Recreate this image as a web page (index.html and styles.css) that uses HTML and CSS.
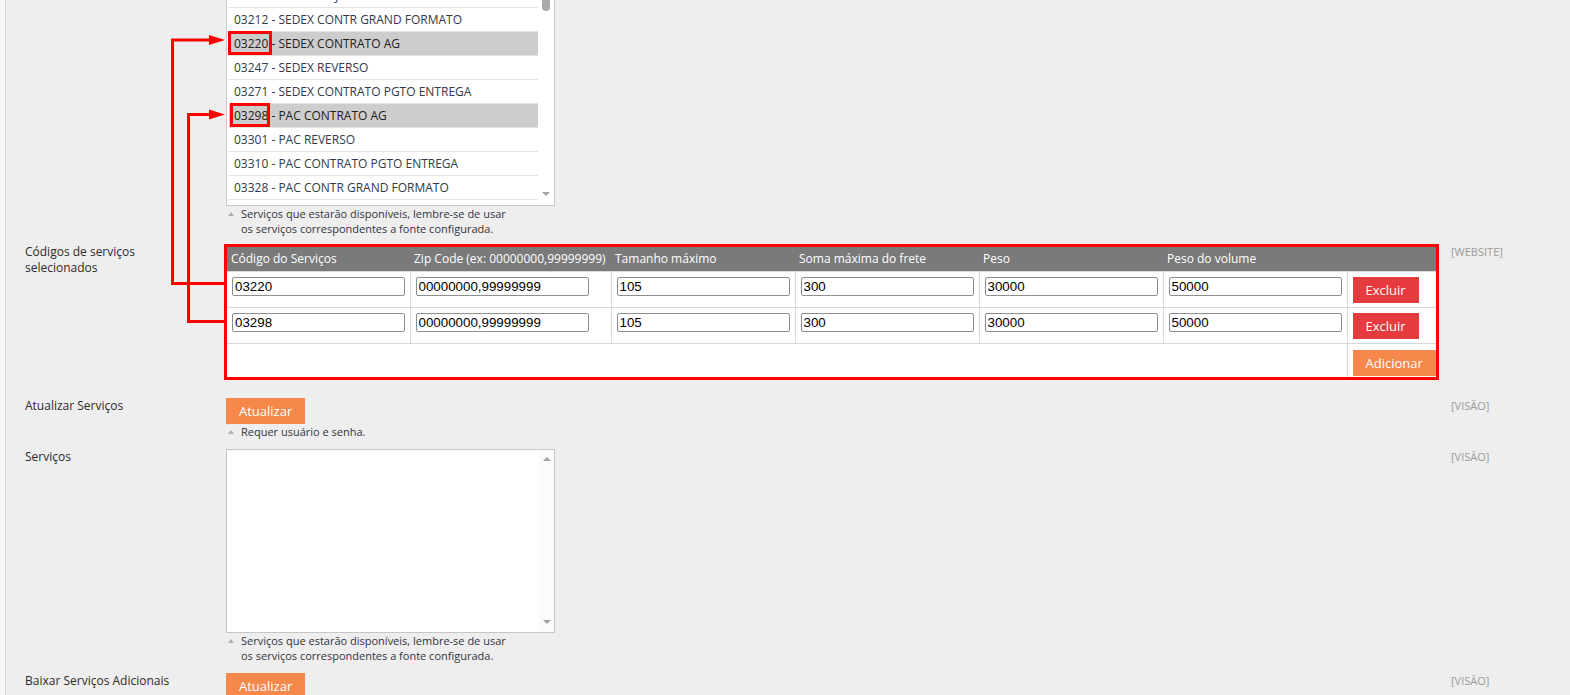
FILE: index.html
```html
<!DOCTYPE html>
<html lang="pt-BR">
<head>
    <meta charset="UTF-8">
    <meta name="viewport" content="width=device-width, initial-scale=1.0">
    <title>Correios - Configuração de Serviços</title>
    <link rel="stylesheet" href="styles.css">
</head>
<body>

    <div class="page">
        <div class="form">

            <!-- Serviços disponíveis (lista rolada) -->
            <div class="field field-first">
                <div class="field-label"></div>
                <div class="field-value">
                    <div class="listbox">
                        <ul class="listbox-items">
                            <li>03204 - SEDEX HOJE CONTRATO AG</li>
                            <li>03212 - SEDEX CONTR GRAND FORMATO</li>
                            <li class="selected">03220 - SEDEX CONTRATO AG</li>
                            <li>03247 - SEDEX REVERSO</li>
                            <li>03271 - SEDEX CONTRATO PGTO ENTREGA</li>
                            <li class="selected">03298 - PAC CONTRATO AG</li>
                            <li>03301 - PAC REVERSO</li>
                            <li>03310 - PAC CONTRATO PGTO ENTREGA</li>
                            <li>03328 - PAC CONTR GRAND FORMATO</li>
                        </ul>
                        <div class="listbox-scroll">
                            <span class="scroll-thumb"></span>
                            <span class="scroll-arrow scroll-down"></span>
                        </div>
                    </div>
                    <p class="note"><span class="note-icon"></span><span>Serviços que estarão disponíveis, lembre-se de usar<br>os serviços correspondentes a fonte configurada.</span></p>
                </div>
                <div class="field-scope"></div>
            </div>

            <!-- Códigos selecionados -->
            <div class="field field-grid">
                <div class="field-label">Códigos de serviços selecionados</div>
                <div class="field-value">
                    <div class="grid-box">
                        <table class="grid">
                            <colgroup>
                                <col class="col-code">
                                <col class="col-zip">
                                <col class="col-num">
                                <col class="col-num">
                                <col class="col-num">
                                <col class="col-num">
                                <col class="col-action">
                            </colgroup>
                            <thead>
                                <tr>
                                    <th>Código do Serviços</th>
                                    <th>Zip Code (ex: 00000000,99999999)</th>
                                    <th>Tamanho máximo</th>
                                    <th>Soma máxima do frete</th>
                                    <th>Peso</th>
                                    <th>Peso do volume</th>
                                    <th></th>
                                </tr>
                            </thead>
                            <tbody>
                                <tr>
                                    <td><input type="text" class="input-text" value="03220"></td>
                                    <td><input type="text" class="input-text" value="00000000,99999999"></td>
                                    <td><input type="text" class="input-text" value="105"></td>
                                    <td><input type="text" class="input-text" value="300"></td>
                                    <td><input type="text" class="input-text" value="30000"></td>
                                    <td><input type="text" class="input-text" value="50000"></td>
                                    <td><button class="btn btn-delete">Excluir</button></td>
                                </tr>
                                <tr>
                                    <td><input type="text" class="input-text" value="03298"></td>
                                    <td><input type="text" class="input-text" value="00000000,99999999"></td>
                                    <td><input type="text" class="input-text" value="105"></td>
                                    <td><input type="text" class="input-text" value="300"></td>
                                    <td><input type="text" class="input-text" value="30000"></td>
                                    <td><input type="text" class="input-text" value="50000"></td>
                                    <td><button class="btn btn-delete">Excluir</button></td>
                                </tr>
                                <tr class="grid-footer">
                                    <td colspan="6"></td>
                                    <td><button class="btn btn-orange">Adicionar</button></td>
                                </tr>
                            </tbody>
                        </table>
                    </div>
                </div>
                <div class="field-scope">[WEBSITE]</div>
            </div>

            <div class="field">
                <div class="field-label">Atualizar Serviços</div>
                <div class="field-value">
                    <button class="btn btn-orange">Atualizar</button>
                    <p class="note"><span class="note-icon"></span><span>Requer usuário e senha.</span></p>
                </div>
                <div class="field-scope">[VISÃO]</div>
            </div>

            <div class="field">
                <div class="field-label">Serviços</div>
                <div class="field-value">
                    <div class="multiselect">
                        <div class="multiselect-scroll">
                            <span class="scroll-arrow scroll-up"></span>
                            <span class="scroll-arrow scroll-down"></span>
                        </div>
                    </div>
                    <p class="note"><span class="note-icon"></span><span>Serviços que estarão disponíveis, lembre-se de usar<br>os serviços correspondentes a fonte configurada.</span></p>
                </div>
                <div class="field-scope">[VISÃO]</div>
            </div>

            <div class="field">
                <div class="field-label">Baixar Serviços Adicionais</div>
                <div class="field-value">
                    <button class="btn btn-orange">Atualizar</button>
                </div>
                <div class="field-scope">[VISÃO]</div>
            </div>

        </div>
    </div>

    <!-- Marcações em vermelho por cima da tela -->
    <svg class="annotations" width="1570" height="695" viewBox="0 0 1570 695">
        <g fill="none" stroke="#ff0000" stroke-width="3">
            <rect x="229.5" y="32.5" width="41" height="21"/>
            <rect x="231.5" y="104.5" width="37" height="21"/>
            <polyline points="224,283.5 172.5,283.5 172.5,40 212,40"/>
            <polyline points="224,321.5 188.5,321.5 188.5,114.5 212,114.5"/>
        </g>
        <g fill="#ff0000">
            <polygon points="209,35 225,40 209,45"/>
            <polygon points="209,109.5 225,114.5 209,119.5"/>
        </g>
    </svg>

</body>
</html>
```

FILE: styles.css
```css
html,
body {
    height: 100%;
    overflow: hidden;
}

body {
    margin: 0;
    position: relative;
    background-color: #f7f7f7;
    font-family: 'Open Sans', 'Noto Sans', sans-serif;
    font-size: 12px;
    color: #2b2b2b;
}

.page {
    margin-left: 5px;
    border-left: 1px solid #d5d5d5;
    background-color: #eeeeee;
    padding-left: 19px;
    height: 100%;
    overflow: hidden;
}

/* a página está rolada: o topo da lista fica escondido */
.form {
    margin-top: -19px;
}

.field {
    display: grid;
    grid-template-columns: 201px 1225px 1fr;
    margin-bottom: 10px;
}

.field-first {
    margin-bottom: 8px;
}

.field-grid {
    margin-bottom: 18px;
}

.field-label {
    line-height: 16px;
    padding-right: 30px;
}

.field-scope {
    font-size: 11px;
    line-height: 16px;
    color: #9a9a9a;
}

/* lista de serviços */
.listbox {
    display: flex;
    width: 329px;
    height: 225px;
    box-sizing: border-box;
    border: 1px solid #c9c9c9;
    background-color: #ffffff;
    overflow: hidden;
}

.listbox-items {
    flex: 1;
    list-style: none;
    margin: 0;
    padding: 2px 0 0 2px;
}

.listbox-items li {
    height: 24px;
    box-sizing: border-box;
    border-bottom: 1px solid #e2e2e2;
    padding-left: 5px;
    line-height: 23px;
    color: #2f3a4a;
    white-space: nowrap;
}

.listbox-items li.selected {
    background-color: #cdcdcd;
    color: #222222;
}

.listbox-scroll {
    width: 16px;
    display: flex;
    flex-direction: column;
    align-items: center;
}

.scroll-thumb {
    width: 8px;
    height: 19px;
    margin-top: 10px;
    border-radius: 4px;
    background-color: #a8a8a8;
}

.scroll-arrow {
    width: 0;
    height: 0;
    border-left: 4px solid transparent;
    border-right: 4px solid transparent;
}

.scroll-down {
    border-top: 4px solid #a3a3a3;
}

.scroll-up {
    border-bottom: 4px solid #a3a3a3;
}

.listbox-scroll .scroll-down {
    margin-top: auto;
    margin-bottom: 9px;
}

/* textos de ajuda */
.note {
    display: flex;
    margin: 0;
    font-size: 11px;
    line-height: 15px;
    color: #2f3542;
}

.note-icon {
    width: 0;
    height: 0;
    margin: 6px 7px 0 2px;
    border-left: 3px solid transparent;
    border-right: 3px solid transparent;
    border-bottom: 4px solid #a9b1b8;
}

/* tabela de códigos */
.grid-box {
    width: 1215px;
    margin-left: -2px;
    box-sizing: border-box;
    border: 3px solid #ff0000;
    background-color: #ffffff;
}

.grid {
    width: 100%;
    border-collapse: collapse;
    table-layout: fixed;
}

.col-code { width: 183px; }
.col-zip { width: 201px; }
.col-num { width: 184px; }
.col-action { width: 89px; }

.grid th {
    background-color: #7a7a7a;
    color: #ffffff;
    font-weight: normal;
    text-align: left;
    padding: 4px 4px;
    line-height: 16px;
    white-space: nowrap;
}

.grid td {
    border: 1px solid #d9d9d9;
    padding: 5px 5px 4px;
    vertical-align: top;
}

.grid td:first-child {
    border-left: none;
}

.grid td:last-child {
    border-right: none;
}

.grid tr:last-child td {
    border-bottom: none;
}

.grid-footer td {
    padding: 6px 5px 1px;
}

.input-text {
    display: block;
    width: 173px;
    height: 19px;
    box-sizing: border-box;
    margin: 0;
    padding: 0 2px;
    border: 1px solid #8f8f8f;
    border-radius: 2px;
    font-family: 'Liberation Sans', Arial, sans-serif;
    font-size: 13.33px;
    color: #000000;
    background-color: #ffffff;
}

.btn {
    display: block;
    height: 26px;
    margin: 0;
    padding: 0 13px;
    border: none;
    font-family: 'Open Sans', 'Noto Sans', sans-serif;
    font-size: 13px;
    line-height: 26px;
    color: #ffffff;
}

.btn-delete {
    background-color: #e53b3f;
}

.btn-orange {
    background-color: #f5884a;
}

/* caixa de serviços vazia */
.multiselect {
    display: flex;
    justify-content: flex-end;
    width: 329px;
    height: 184px;
    box-sizing: border-box;
    border: 1px solid #c6c6c6;
    background-color: #ffffff;
}

.multiselect-scroll {
    width: 15px;
    display: flex;
    flex-direction: column;
    align-items: center;
    justify-content: space-between;
    padding: 7px 0 8px;
    box-sizing: border-box;
    background-color: #fbfbfb;
}

.annotations {
    position: absolute;
    top: 0;
    left: 0;
    pointer-events: none;
}
```
